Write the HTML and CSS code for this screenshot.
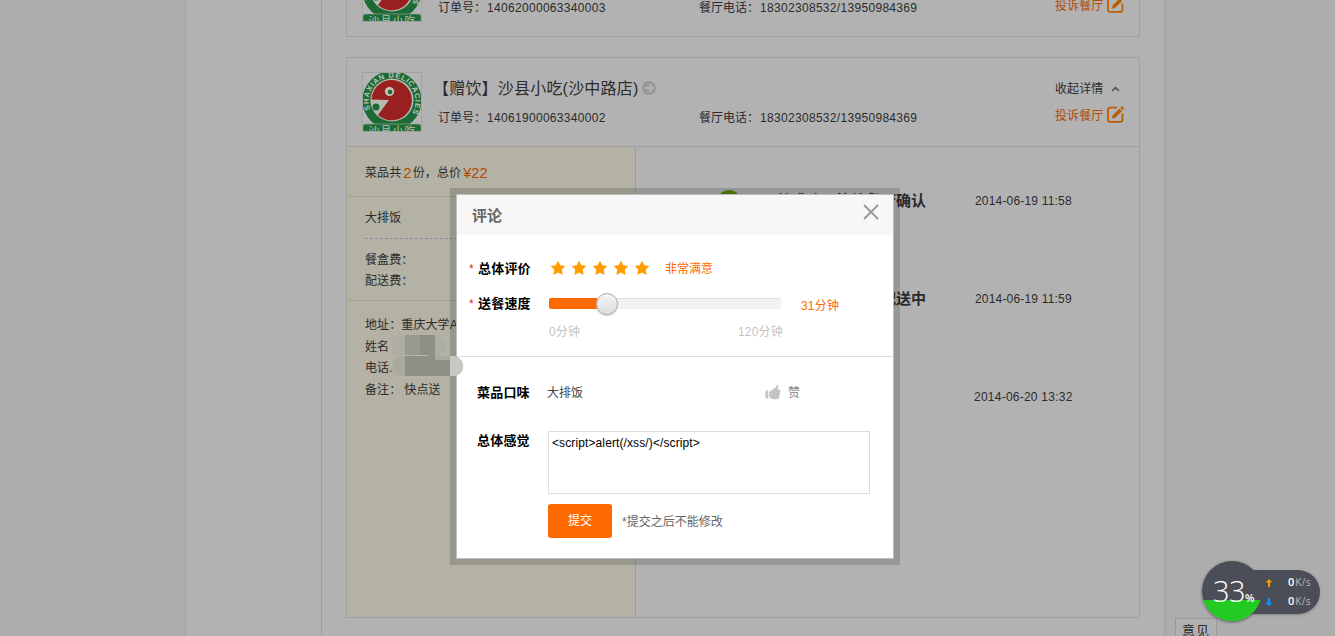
FILE: index.html
```html
<!DOCTYPE html>
<html lang="zh-CN">
<head>
<meta charset="utf-8">
<title>我的订单</title>
<link rel="stylesheet" href="styles.css">
</head>
<body>
<svg width="0" height="0" class="defs">
  <symbol id="logo" viewBox="0 0 60 60">
    <rect x=".5" y=".5" width="59" height="59" fill="#b5b5b5" stroke="#a2a2a2"/>
    <svg x="1" y="1" width="58" height="58" viewBox="1 1 58 58">
      <circle cx="30" cy="28.500" r="29.500" fill="#1d6a35"/>
      <circle cx="30" cy="28" r="21.500" fill="#b9b9b4"/>
      <path d="M9.500 27.500A20.200 20.200 0 1 1 16 43L27 28Z" fill="#98201f"/>
      <circle cx="27.500" cy="19.500" r="4.600" fill="#c0c4bc"/><circle cx="28" cy="20" r="2.300" fill="#1d6a35"/>
      <path d="M8.500 28H26L14.500 42.500Q8.500 37 8.500 28Z" fill="#b9b9b4"/>
      <circle cx="14" cy="35" r="3.600" fill="#1d6a35"/>
      <path id="arc" d="M10.700 42A23.300 23.300 0 1 1 49.300 42" fill="none"/>
      <text class="logo-ring" textLength="94" lengthAdjust="spacing"><textPath href="#arc" startOffset="5">SHAXIAN DELICACIES</textPath></text>
      <rect x="1" y="52" width="58" height="10" rx="2" fill="#1d6a35" stroke="#8fa592" stroke-width=".7"/>
      <text x="30.500" y="63" text-anchor="middle" class="logo-name">沙县小吃</text>
    </svg>
  </symbol>
  <symbol id="edit" viewBox="0 0 16 16">
    <path d="M9.500 1.500H3Q1 1.500 1 3.500V13Q1 15 3 15H12.500Q14.500 15 14.500 13V7" fill="none" stroke="#b85f06" stroke-width="1.700"/>
    <path d="M4.500 12L5.400 8.800L11.800 2.300L14.200 4.700L7.700 11.100ZM12.500 1.600L13.700 .400Q14.200 0 14.700 .500L15.700 1.500Q16.200 2 15.700 2.500L14.800 3.800Z" fill="#b85f06"/>
  </symbol>
  <symbol id="star" viewBox="0 0 16 16"><path d="M8 .8L10.300 5.300L15.400 6.100L11.800 9.600L12.600 14.900L8 12.400L3.400 14.900L4.200 9.600L.6 6.100L5.700 5.300Z" fill="#ff9c00"/></symbol>
</svg>

<div class="page">
  <aside class="side"></aside>
  <main class="main">
    <section class="card">
      <header class="head">
        <svg class="logo"><use href="#logo"/></svg>
        <div class="info"><div class="name"></div><div class="order">订单号：<span class="num">14062000063340003</span></div></div>
        <div class="phone">餐厅电话：<span class="num">18302308532/13950984369</span></div>
        <div class="acts"><div class="toggle"></div><div class="complain">投诉餐厅<svg class="edit"><use href="#edit"/></svg></div></div>
      </header>
    </section>

    <section class="card detail">
      <header class="head">
        <svg class="logo"><use href="#logo"/></svg>
        <div class="info">
          <div class="name">【赠饮】沙县小吃(沙中路店)<svg class="go" viewBox="0 0 14 14"><circle cx="7" cy="7" r="7" fill="#989898"/><path d="M3 7H10.500M7.200 3.500L10.700 7L7.200 10.500" fill="none" stroke="#b6b6b6" stroke-width="1.800"/></svg></div>
          <div class="order">订单号：<span class="num">14061900063340002</span></div>
        </div>
        <div class="phone">餐厅电话：<span class="num">18302308532/13950984369</span></div>
        <div class="acts">
          <div class="toggle">收起详情<svg class="caret" viewBox="0 0 9 6"><path d="M1 5L4.500 1.700L8 5" fill="none" stroke="#555" stroke-width="1.600"/></svg></div>
          <div class="complain">投诉餐厅<svg class="edit"><use href="#edit"/></svg></div>
        </div>
      </header>
      <div class="body">
        <div class="bill">
          <div class="sum">菜品共<b class="big">2</b>份，总价<b class="big price">¥22</b></div>
          <div class="dishes">
            <div class="dish">大排饭</div>
            <div class="fees"><div>餐盒费：</div><div>配送费：</div></div>
          </div>
          <div class="address">
            <div>地址：重庆大学A区</div><div>姓名</div><div>电话.</div><div>备注：<span class="note">快点送</span></div>
          </div>
        </div>
        <div class="track">
          <div class="step"><i class="dot"></i><b class="state">下单成功，等待餐厅确认</b><span class="time">2014-06-19 11:58</span></div>
          <div class="step"><b class="state">配送中</b><span class="time">2014-06-19 11:59</span></div>
          <div class="step"><span class="time last">2014-06-20 13:32</span></div>
        </div>
      </div>
    </section>
  </main>
</div>

<div class="feedback">意见</div>

<div class="dialog">
  <div class="panel">
    <div class="title"><span>评论</span><svg class="close" viewBox="0 0 16 16"><path d="M1 1L15 15M15 1L1 15" stroke="#999" stroke-width="1.900"/></svg></div>
    <div class="rate">
      <div class="row r1"><label class="lab"><i>*</i>总体评价</label><div class="stars"><svg><use href="#star"/></svg><svg><use href="#star"/></svg><svg><use href="#star"/></svg><svg><use href="#star"/></svg><svg><use href="#star"/></svg></div><span class="hot">非常满意</span></div>
      <div class="row r2"><label class="lab"><i>*</i>送餐速度</label><div class="bar"><div class="fill"></div><div class="knob"></div></div><span class="mins">31分钟</span></div>
      <div class="scale"><span>0分钟</span><span>120分钟</span></div>
    </div>
    <div class="taste">
      <label class="lab">菜品口味</label><span class="food">大排饭</span>
      <span class="like"><svg viewBox="0 0 16 16"><path d="M1.300 6.500H3.300V14.800H1.300Q.2 14 .2 10.500Q.2 7.500 1.300 6.500ZM4.200 8L8.500 5Q11.300 3 12.600 .6Q13.800 .8 13.200 3.200L12.600 5.500H14Q15.700 5.500 15.300 7.500L14.300 13Q13.800 15.300 12 15.300H8.500Q6 14.900 4.200 13Z" fill="#c5c5c5"/></svg>赞</span>
    </div>
    <div class="feel"><label class="lab">总体感觉</label><div class="area">&lt;script&gt;alert(/xss/)&lt;/script&gt;</div></div>
    <div class="send"><div class="submit">提交</div><span>*提交之后不能修改</span></div>
  </div>
</div>

<svg class="mosaic" viewBox="0 0 78 46">
  <rect x="0" y="0" width="55" height="21" rx="10" fill="#adada1"/>
  <rect x="1" y="21" width="71" height="20" rx="10" fill="#a9a99e"/>
  <path d="M14 0H44V25H60V41H14Z" fill="#8e9084"/>
  <path d="M14 0H29V20H14Z" fill="#989a8e"/>
  <path d="M5 20.500H37" stroke="#b5b5aa"/>
  <path d="M59 21H63Q72 23 72 31Q72 40 63 41H59Z" fill="#c8c9c4"/>
</svg>

<div class="meter">
  <div class="pill">
    <div class="speed"><svg viewBox="0 0 8 8"><path d="M4 0L7.500 3.500H5V8H3V3.500H.5Z" fill="#ff9500"/></svg><span>0<small>K/s</small></span></div>
    <div class="speed"><svg viewBox="0 0 8 8"><path d="M4 8L7.500 4.500H5V0H3V4.500H.5Z" fill="#0a95ff"/></svg><span>0<small>K/s</small></span></div>
  </div>
  <div class="ball">33<small>%</small></div>
</div>
</body>
</html>
```
FILE: styles.css
```css
* { box-sizing: border-box; }
body {
  margin: 0; height: 636px; overflow: hidden; position: relative;
  background: #adadad; color: #2b2b2b;
  font: 12px/20px "Liberation Sans", "Noto Sans CJK SC", sans-serif;
}
svg { display: block; flex: none; }
.defs { position: absolute; }
b, i { font-style: normal; }
.num { letter-spacing: .31px; margin-left: 1px; }

.page { display: flex; width: 980px; height: 720px; margin: -53px 0 0 185px; background: #b2b2b2; border: solid #a0a0a0; border-width: 0 1px; }
.side { width: 136px; border-right: 1px solid #a0a0a0; }
.main { width: 818px; margin-left: 24px; }
.card { width: 794px; border: 1px solid #a0a0a0; margin-bottom: 20px; }
.card:first-child { height: 90px; }
.detail { height: 561px; }
.head { display: flex; height: 88px; padding-left: 15px; }
.logo { width: 60px; height: 60px; margin-top: 14px; }
.logo-ring { font: bold 7.500px "Liberation Sans", sans-serif; fill: #b9c4b9; }
.logo-name { font: 11px "Noto Sans CJK SC", sans-serif; fill: #b4c3b5; letter-spacing: 1px; }
.info { width: 277px; padding: 21px 0 0 16px; }
.name { display: flex; align-items: center; height: 20px; font-size: 16px; letter-spacing: .2px; white-space: nowrap; margin-left: -5px; }
.go { width: 14px; height: 14px; margin: -3px 0 0 4px; }
.order { margin-top: 8px; padding-top: 1px; }
.phone { width: 356px; padding: 50px 0 0; }
.toggle, .complain { display: flex; align-items: center; height: 20px; }
.acts { padding-top: 21px; letter-spacing: .1px; }
.complain { margin-top: 7px; color: #b34a00; }
.edit { width: 17px; height: 17px; margin: -4px 0 0 4px; }
.caret { width: 9px; height: 6px; margin: -1px 0 0 8px; }

.body { display: flex; height: 471px; border-top: 1px solid #a0a0a0; }
.bill { width: 289px; background: #b3b2a4; border-right: 1px solid #a09f94; letter-spacing: .1px; }
.sum { display: flex; height: 50px; padding: 16px 0 0 18px; border-bottom: 1px solid #a7a584; }
.big { font-weight: 400; font-size: 15px; color: #b34a00; padding: 0 1px 0 2px; }
.price { font-size: 14.500px; }
.dishes { height: 104px; border-bottom: 1px solid #a7a584; padding: 11px 18px 0; }
.dish { height: 31px; border-bottom: 1px dashed #8c8ca0; }
.fees { padding-top: 11px; line-height: 21px; }
.address { padding: 14px 0 0 18px; line-height: 21.600px; }
.note { margin-left: 3px; }

.track { flex: 1; padding-top: 44px; }
.step { display: flex; justify-content: flex-end; width: 436px; height: 98px; }
.dot { width: 24px; height: 24px; margin: -1px 20px 0 0; border-radius: 50%; background: #59820f; }
.state { width: 165px; font-size: 15px; text-align: right; white-space: nowrap; }
.time { width: 97px; margin-left: 49px; letter-spacing: .18px; white-space: nowrap; }
.last { width: 98px; letter-spacing: .24px; }

.feedback { position: absolute; left: 1175px; top: 618px; width: 42px; height: 30px; border: 1px solid #999; background: #b0b0b0; padding: 2px 0 0 6px; font-size: 13px; letter-spacing: 1px; }

.dialog { position: absolute; left: 450px; top: 188px; width: 450px; height: 377px; padding: 6px; background: rgba(0, 0, 0, .15); }
.panel { height: 365px; background: #fff; border: 1px solid #bdbdbd; }
.title { display: flex; justify-content: space-between; height: 40px; padding: 11px 14px 0 15px; background: #f7f7f7; font-size: 15px; font-weight: 700; color: #666; }
.close { width: 16px; height: 16px; margin-top: -2px; }
.rate { height: 122px; padding-top: 23px; border-bottom: 1px solid #dcdcdc; }
.row { display: flex; align-items: center; height: 20px; }
.r2 { margin-top: 15px; }
.lab { width: 91px; padding: 1px 0 0 20px; flex: none; font-size: 13px; font-weight: 700; letter-spacing: .2px; color: #000; white-space: nowrap; }
.row .lab { padding: 2px 0 0 21px; }
.lab i { display: inline-block; width: 9px; margin-left: -9px; color: #e6232a; font-weight: 400; font-size: 12px; }
.stars { display: flex; gap: 5px; padding-left: 2px; }
.stars svg { width: 16px; height: 16px; }
.hot { margin: 2px 0 0 15px; color: #ff6a00; }
.bar { display: flex; align-items: center; width: 232px; height: 11px; margin-left: 1px; background: #f2f2f2; border-top: 1px solid #dedede; border-radius: 2px; }
.fill { width: 48px; height: 11px; margin-top: -1px; background: #ff6a00; border-radius: 2px 0 0 2px; }
.knob { width: 22px; height: 22px; flex: none; margin-left: -1px; border: 1px solid #aaa; border-radius: 50%; background: linear-gradient(#f5f5f5, #ddd); box-shadow: 0 1px 1px #ccc; }
.mins { margin: 5px 0 0 20px; color: #ff6a00; letter-spacing: .2px; }
.scale { display: flex; justify-content: space-between; width: 234px; margin: 9px 0 0 92px; color: #c3c3c3; letter-spacing: .2px; }
.taste { display: flex; height: 48px; margin-top: 25px; }
.taste .lab { width: 90px; }
.food { width: 218px; padding-top: 1px; color: #444; }
.like { display: flex; gap: 7px; padding-top: 1px; color: #888; }
.like svg { width: 16px; height: 16px; margin-top: 1px; }
.feel { display: flex; height: 74px; }
.area { width: 322px; height: 63px; margin-top: 1px; border: 1px solid #dcdcdc; padding: 1px 3px; color: #000; letter-spacing: .11px; }
.send { display: flex; align-items: center; margin-left: 91px; color: #666; }
.send span { padding-top: 1px; }
.submit { width: 64px; height: 34px; margin-right: 10px; border-radius: 3px; background: #ff6a00; color: #fff; line-height: 35px; text-align: center; }

.mosaic { position: absolute; left: 391px; top: 335px; width: 78px; height: 46px; }

.meter { position: absolute; left: 1202px; top: 561px; width: 118px; height: 60px; font-family: "Open Sans", sans-serif; color: #fff; }
.pill { width: 88px; height: 44px; margin: 9px 0 0 30px; padding: 3px 0 0 33px; border-radius: 22px; background: #4b4e57; box-shadow: 0 1px 3px #888; }
.speed { display: flex; align-items: center; height: 19px; }
.speed svg { width: 8px; height: 8px; }
.speed span { margin: -1px 0 0 15px; font-size: 11px; font-weight: 600; white-space: nowrap; }
.speed small { margin-left: 1px; font-size: 10px; font-weight: 400; letter-spacing: .3px; color: #bbb; }
.ball { position: absolute; left: 0; top: 0; width: 60px; height: 60px; padding-left: 11px; border-radius: 50%; background: linear-gradient(#4b4e57 39px, #22ca22 39px); box-shadow: 0 1px 3px #555; font: 300 29px/60px "Open Sans", sans-serif; letter-spacing: -.5px; white-space: nowrap; }
.ball small { font-size: 11px; font-weight: 600; }
```
